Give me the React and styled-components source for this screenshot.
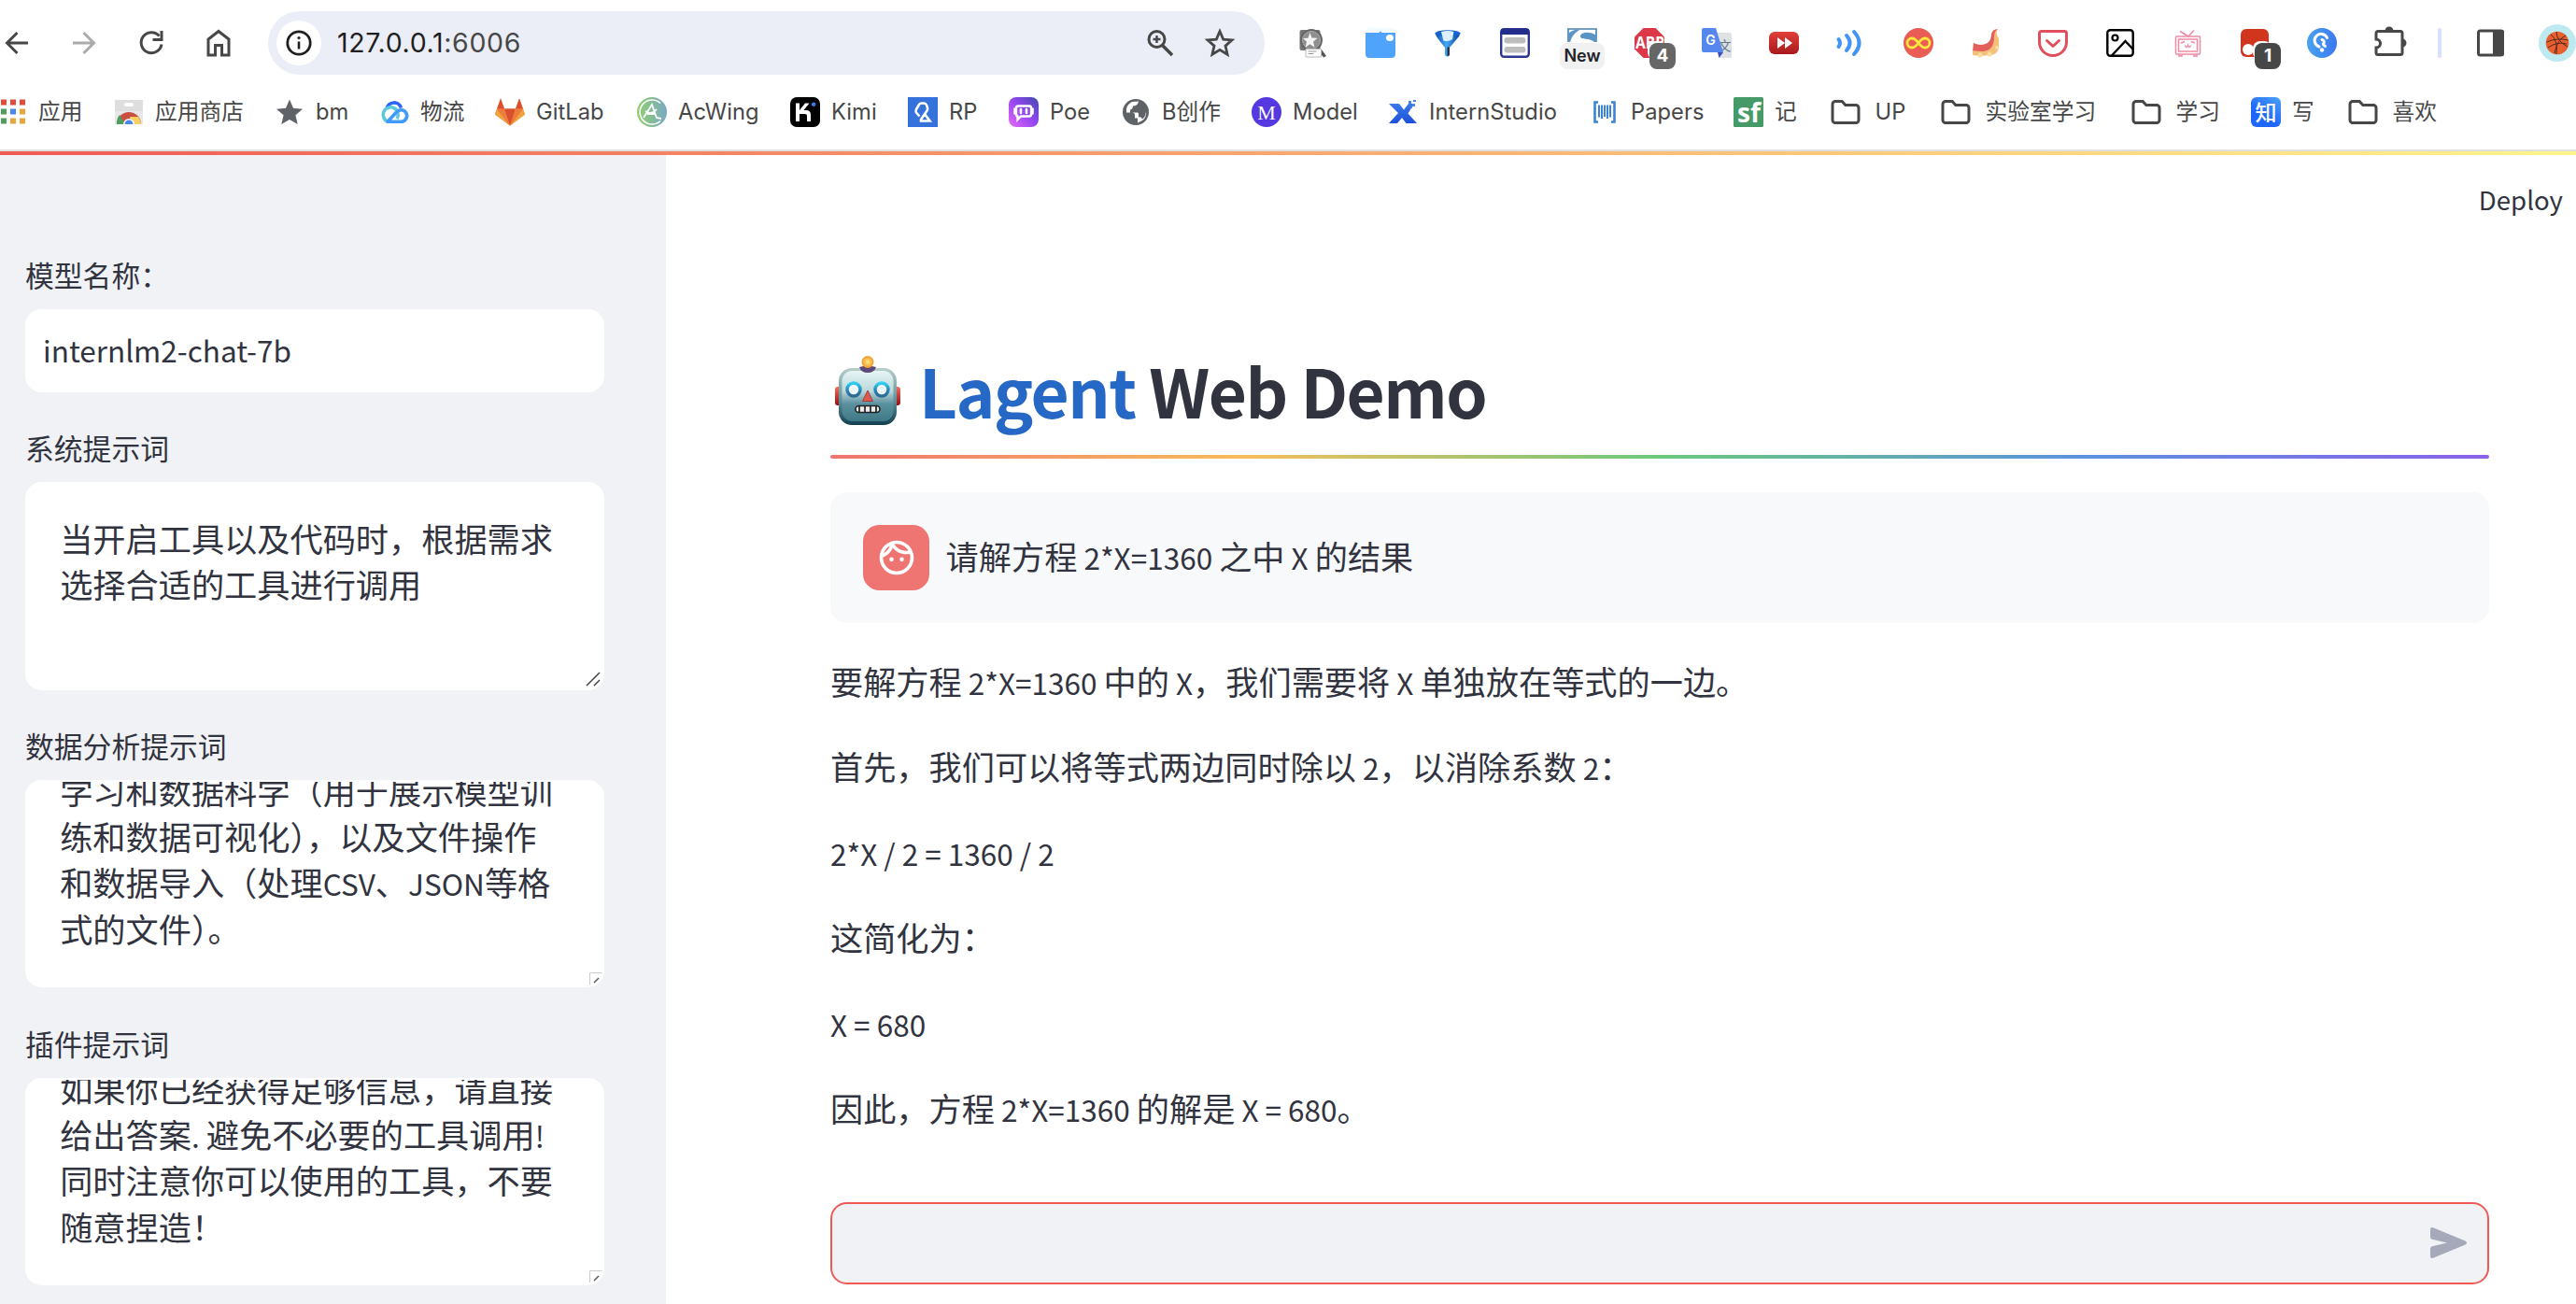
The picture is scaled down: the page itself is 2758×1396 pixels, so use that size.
import React from "react";
import styled, { createGlobalStyle } from "styled-components";

const Global = createGlobalStyle`
  * { box-sizing: border-box; }
  body { margin: 0; background: #fff; overflow: hidden; }
`;
const UI = '"Inter", "Noto Sans CJK SC", sans-serif';
const BODY = '"Noto Sans CJK SC", "Noto Sans", sans-serif';

const Page = styled.div`
  width: 2758px;
  height: 1396px;
  display: flex;
  flex-direction: column;
  overflow: hidden;
  font-family: ${BODY};
  color: #31333f;
`;

/* ---------- browser chrome ---------- */
const Toolbar = styled.div`
  height: 92px;
  flex: none;
  display: flex;
  align-items: center;
`;
const NavGroup = styled.div`
  width: 287px;
  flex: none;
  display: flex;
  padding-left: 2px;
`;
const NavButton = styled.div`
  width: 72px;
  flex: none;
`;
const Glyph = styled.svg`
  display: block;
  width: 32px;
  height: 32px;
  overflow: visible;
  flex: none;
`;
const Omnibox = styled.div`
  width: 1067px;
  height: 68px;
  flex: none;
  border-radius: 34px;
  background: #ebeef7;
  display: flex;
  align-items: center;
  padding: 0 32px 0 9px;
`;
const SiteInfo = styled.div`
  width: 48px;
  height: 48px;
  border-radius: 50%;
  background: #fff;
  display: flex;
  align-items: center;
  justify-content: center;
`;
const Url = styled.div`
  flex: 1;
  margin-left: 17px;
  font: 400 28.5px/40px ${UI};
  letter-spacing: 0.65px;
  color: #1f1f1f;
`;
const Port = styled.span`
  color: #474747;
`;
const OmniIcons = styled.div`
  display: flex;
  gap: 32px;
`;
const Extensions = styled.div`
  display: flex;
  margin-left: 16px;
  align-items: center;
`;
const Ext = styled.div`
  position: relative;
  width: 72px;
  flex: none;
  display: flex;
  justify-content: center;
`;
const Badge = styled.span`
  position: absolute;
  top: 16px;
  left: ${(p) => (p.$wide ? 12 : 36)}px;
  width: ${(p) => (p.$wide ? 48 : 28)}px;
  height: 28px;
  border-radius: 8px;
  background: ${(p) => p.$bg};
  color: ${(p) => p.$fg};
  font: ${(p) => (p.$wide ? "600 18px" : "700 19px")}/27px ${UI};
  text-align: center;
`;
const Divider = styled.div`
  width: 4px;
  height: 32px;
  border-radius: 2px;
  background: #d6e2fb;
  margin-left: 16px;
`;
const PanelButton = styled.div`
  margin-left: 36px;
`;
const Avatar = styled.div`
  width: 40px;
  height: 40px;
  flex: none;
  margin-left: 36px;
  border-radius: 50%;
  background: #bde9f0;
  display: flex;
  align-items: center;
  justify-content: center;
`;
const Bookmarks = styled.div`
  height: 68px;
  flex: none;
  display: flex;
  align-items: center;
  padding-bottom: 12px;
`;
const BookmarkRow = styled.div`
  display: flex;
  margin-left: -3px;
`;
const Bookmark = styled.div`
  width: ${(p) => p.$w}px;
  flex: none;
  display: flex;
  align-items: center;
  gap: ${(p) => (p.$folder ? 15.5 : 12)}px;
  white-space: nowrap;
  font: 400 23.7px/32px ${UI};
  letter-spacing: 0.05px;
  color: #474747;
`;
const ChromeEdge = styled.div`
  height: 2px;
  flex: none;
  background: #e0e0e0;
`;
const Decoration = styled.div`
  height: 4px;
  flex: none;
  background: linear-gradient(90deg, #f05a55, #fff58a);
`;

/* ---------- app ---------- */
const Body = styled.div`
  flex: 1;
  display: flex;
  min-height: 0;
`;
const Sidebar = styled.div`
  width: 713px;
  flex: none;
  background: #f0f2f6;
  padding: 105px 0 0 27px;
`;
const Field = styled.div`
  width: 620px;
  margin-bottom: ${(p) => p.$gap}px;
`;
const Label = styled.div`
  height: 60px;
  font-size: 30.8px;
  line-height: 45px;
`;
const TextInput = styled.div`
  height: 89px;
  border-radius: 17.6px;
  background: #fff;
  padding: 0 19px;
  font-size: 31.5px;
  line-height: 86px;
`;
const TextArea = styled.div`
  position: relative;
  height: ${(p) => p.$h}px;
  border-radius: 17.6px;
  background: #fff;
  border: 2px solid #fff;
  padding: 35.2px 0 35.2px 35.2px;
  overflow: hidden;
  display: flex;
  flex-direction: column;
  justify-content: ${(p) => (p.$scrolled ? "flex-end" : "flex-start")};
  font-size: 35.2px;
  line-height: 46px;
  white-space: pre;
`;
const Line = styled.div`
  flex: none;
  height: 49.3px;
`;
const Grip = styled.svg`
  position: absolute;
  right: 0;
  bottom: 0;
  width: 18px;
  height: 20px;
`;
const Main = styled.div`
  flex: 1;
  display: flex;
  flex-direction: column;
`;
const Header = styled.div`
  height: 206px;
  flex: none;
  padding: 22px 14px 0 0;
  text-align: right;
  font-size: 27.6px;
  line-height: 50px;
`;
const Column = styled.div`
  width: 1776px;
  margin-left: 176px;
`;
const Title = styled.h1`
  margin: 0;
  height: 115px;
  padding-bottom: 24px;
  display: flex;
  align-items: center;
  font-size: 71px;
  font-weight: 700;
  line-height: 91px;
  letter-spacing: -1.5px;
  white-space: pre;
`;
const Robot = styled.svg`
  width: 70px;
  height: 74px;
  margin: 0 20px 0 5px;
`;
const Brand = styled.span`
  color: #2668c5;
`;
const Rainbow = styled.div`
  height: 4px;
  border-radius: 2px;
  background: linear-gradient(90deg, #f07470, #f6bd5c 25%, #6cc97c 50%, #5b93dd 75%, #8a62ea);
`;
const UserMessage = styled.div`
  margin-top: 36px;
  height: 140px;
  border-radius: 17.6px;
  background: #f8f9fb;
  display: flex;
  align-items: center;
  padding-left: 35px;
  gap: 17.6px;
`;
const UserAvatar = styled.div`
  width: 71px;
  height: 70px;
  border-radius: 17.6px;
  background: #ef7572;
  display: flex;
  align-items: center;
  justify-content: center;
`;
const Text = styled.p`
  margin: 0;
  font-size: 35.2px;
  line-height: 51.5px;
  height: 56.3px;
  white-space: pre;
`;
const Answer = styled.div`
  margin-top: 36px;
  display: flex;
  flex-direction: column;
  gap: 35.2px;
`;
const ChatInput = styled.div`
  margin-top: 70.2px;
  height: 88px;
  border: 2px solid #ef5a54;
  border-radius: 17.6px;
  background: #f0f2f6;
  display: flex;
  align-items: center;
  justify-content: flex-end;
  padding-right: 22px;
`;
const Latin = styled.span`
  font-size: 0.8955em;
  line-height: 1;
`;
const Mixed = ({ children }) =>
  children
    .split(/([\x20-\x7e]+)/)
    .map((s, i) => (/^[\x20-\x7e]+$/.test(s) ? <Latin key={i}>{s}</Latin> : s));

const G = "#474747";
const stroke = (c, w) => ({ fill: "none", stroke: c, strokeWidth: w });

const Folder = () => (
  <Glyph viewBox="0 0 32 32">
    <path d="M2 7.5a3 3 0 0 1 3-3h7.2l3.6 4H27a3 3 0 0 1 3 3v13a3 3 0 0 1-3 3H5a3 3 0 0 1-3-3z" {...stroke(G, 3)} />
  </Glyph>
);

const bookmarks = [
  { w: 125, t: "应用", i: <Glyph viewBox="0 0 32 32">
      {["#e24a3b", "#e24a3b", "#e24a3b", "#4f9c5f", "#4787ee", "#e5a63a", "#4f9c5f", "#e5a63a", "#e5a63a"].map((c, k) => (
        <rect key={k} x={4 + (k % 3) * 10} y={2.5 + Math.floor(k / 3) * 10} width="6" height="6" fill={c} />))}
    </Glyph> },
  { w: 172, t: "应用商店", i: <Glyph viewBox="0 0 32 32">
      <rect x="1" y="3" width="30" height="26" fill="#e8e8e8" /><path d="M1 3h30v12H1z" fill="#dedede" />
      <rect x="11" y="6" width="10" height="4" rx="2" fill="#fff" />
      <path d="M3 29a13 13 0 0 1 26 0z" fill="#c94f42" /><path d="M3 29q0-7 3-10l6 10z" fill="#4f9c5f" /><path d="M17 21h9q3 4 3 8H18z" fill="#f6d060" />
      <path d="M10 29a6 6 0 0 1 12 0z" fill="#fff" /><path d="M11.5 29a4.5 4.5 0 0 1 9 0z" fill="#4d86e8" />
    </Glyph> },
  { w: 112, t: "bm", i: <Glyph viewBox="0 0 32 32"><path d="M16 2.5l4 9.3 10 .9-7.600 6.600 2.300 9.800-8.700-5.200-8.700 5.200 2.300-9.800L2 12.700l10-.9z" fill="#5f6368" /></Glyph> },
  { w: 124, t: "物流", i: <Glyph viewBox="0 0 32 32">
      <path d="M8 12.500a8 8 0 0 1 15.500-1" {...stroke("#2c66f5", 3.600)} />
      <path d="M19 23a8 8 0 1 0-9 3.500" {...stroke("#5cc8dc", 3.600)} />
      <path d="M9 26.300L18.500 16a6.300 6.300 0 1 1 4.500 10.300z" {...stroke("#419bfa", 3.600)} strokeLinejoin="round" />
    </Glyph> },
  { w: 152, t: "GitLab", i: <Glyph viewBox="0 0 32 32">
      <path d="M16 30.500L0 18.500 6 1.500 10 12.500h12L26 1.500l6 17z" fill="#e8743b" />
      <path d="M6 1.500l4 11H2zM26 1.500l4 11h-8z" fill="#d9502f" /><path d="M10 12.500h12l-6 18z" fill="#d9502f" />
      <path d="M2 12.500L0 18.500l16 12zM30 12.500l2 6-16 12z" fill="#f0a33c" /><path d="M2 12.500h8l6 18zM30 12.500h-8l-6 18z" fill="#ee7c3d" />
    </Glyph> },
  { w: 164, t: "AcWing", i: <Glyph viewBox="0 0 32 32">
      <defs><linearGradient id="ac"><stop offset="0" stopColor="#8fd06c" /><stop offset="1" stopColor="#7aa9c4" /></linearGradient></defs>
      <circle cx="16" cy="16" r="16" fill="url(#ac)" /><path d="M25 6.500a13 13 0 1 0 0 19" {...stroke("#fff", 1.600)} />
      <path d="M7 22L16 8l5 14 5 1M9 15q6 5 12-2M11 18h8" {...stroke("#fff", 1.800)} />
    </Glyph> },
  { w: 126, t: "Kimi", i: <Glyph viewBox="0 0 32 32"><rect width="32" height="32" rx="7" fill="#000" />
      <path d="M6 6.500h4v7.500l6-7.500h4.500L14.500 14H17q5 0 5 5v7h-4v-6q0-2-2-2h-6v8H6z" fill="#fff" /><path d="M23 9V7.500A2.200 2.200 0 1 1 25.300 10z" fill="#2f80f0" /></Glyph> },
  { w: 108, t: "RP", i: <Glyph viewBox="0 0 32 32"><rect width="32" height="32" fill="#3672dc" />
      <path d="M12.500 20.500L9 16.500q-1-1.500 0-3.500l3-5q1-1.500 2.500-1.500h3q1.500 0 2.500 2l1 3q.500 1.500-.500 3L14 24v1.500h9.500L18 18" {...stroke("#fff", 2.600)} /></Glyph> },
  { w: 120, t: "Poe", i: <Glyph viewBox="0 0 32 32">
      <defs><linearGradient id="poe" x1="0" y1="1" x2="1" y2="0"><stop offset="0" stopColor="#e86af5" /><stop offset=".5" stopColor="#9747f2" /><stop offset="1" stopColor="#4149b0" /></linearGradient></defs>
      <rect width="32" height="32" rx="8" fill="url(#poe)" />
      <path d="M10 9.500h12a2 2 0 0 1 2 2v7a2 2 0 0 1-2 2H13l-3.500 3.500v-3.500a2 2 0 0 1-1.500-2v-7a2 2 0 0 1 2-2z" {...stroke("#fff", 2.400)} />
      <path d="M6.500 12.500v5M25.500 12.500v5M13 13v4M19 13v4" {...stroke("#fff", 2.600)} strokeLinecap="round" /></Glyph> },
  { w: 140, t: "B创作", i: <Glyph viewBox="0 0 32 32"><circle cx="16" cy="16" r="14" fill="#5f6368" />
      <path d="M19 4.500q-1 5-6 5 0 3-3 4v3h8q1 0 1 2v3q3-1 4 2 4-3 4-9 1 8-5 11l-4 2v-5h-3v-3q0-3-3-3H6q-1-8 6-11.500z" fill="#fff" /></Glyph> },
  { w: 146, t: "Model", i: <Glyph viewBox="0 0 32 32"><circle cx="16" cy="16" r="16" fill="#5538e0" />
      <text x="16" y="23.500" textAnchor="middle" fontFamily="Liberation Serif, serif" fontSize="22" fill="#fff">M</text></Glyph> },
  { w: 216, t: "InternStudio", i: <Glyph viewBox="0 0 32 32">
      <defs><linearGradient id="ix" x2="0" y2="1"><stop offset="0" stopColor="#3a7ae8" /><stop offset="1" stopColor="#1c50d8" /></linearGradient></defs>
      <path d="M1 7h11l5 6.500L22 7h6l-6.500 10.500L31 28H19.500l-4.500-6-5 6H1l10-11z" fill="url(#ix)" />
      <path d="M22 4h3v3h-3zM26 7h3v3h-3zM24 10h2v2h-2zM27 3h3v2h-3z" fill="#4a86ea" /></Glyph> },
  { w: 154, t: "Papers", i: <Glyph viewBox="0 0 32 32"><path d="M9 5.500H5.500v21H9M23 5.500h3.500v21H23" {...stroke("#3c82d6", 2.600)} />
      <path d="M10 8.500v13M13 8.500v14.500M16 8.500v12.500M19 8.500v14.500M22 8.500v13" {...stroke("#3c82d6", 2)} /></Glyph> },
  { w: 104, t: "记", i: <Glyph viewBox="0 0 32 32"><rect width="32" height="32" rx="1.500" fill="#459a67" />
      <text x="16.500" y="26.500" textAnchor="middle" fontFamily="Open Sans, sans-serif" fontWeight="700" fontSize="29" textLength="25" lengthAdjust="spacingAndGlyphs" fill="#fff">sf</text></Glyph> },
  { w: 118, t: "UP", folder: true },
  { w: 204, t: "实验室学习", folder: true },
  { w: 128, t: "学习", folder: true },
  { w: 104, t: "写", i: <Glyph viewBox="0 0 32 32">
      <defs><linearGradient id="zh" x1="1" y1="0" x2=".3" y2="1"><stop offset="0" stopColor="#4aa3f7" /><stop offset=".7" stopColor="#1f66fa" /></linearGradient></defs>
      <rect width="32" height="32" rx="6" fill="url(#zh)" />
      <text x="16" y="24.500" textAnchor="middle" fontFamily="Noto Sans CJK SC, sans-serif" fontWeight="500" fontSize="23" fill="#fff">知</text></Glyph> },
  { w: 120, t: "喜欢", folder: true },
];

const extensions = [
  <Glyph viewBox="0 0 32 32"><rect x="1.500" y="2" width="22" height="22" rx="2" fill="#777" /><circle cx="14" cy="13" r="12" fill="#666" /><circle cx="14" cy="13" r="9.500" fill="#8e8e8e" stroke="#aaa" />
    <path d="M12.500 5l2 5.500 6 .3-4.500 4 1.500 6-5-3.500-5 3.500 1.500-6L5 11l5.500-.3z" fill="#f4f4f4" /><path d="M22 25l3-2 5 7-3 1.500z" fill="#555" /><path d="M8 22.500h16.500V31H8z" fill="#fff" stroke="#bbb" /><path d="M10.500 25h9M10.500 27.500h6" stroke="#999" /></Glyph>,
  <Glyph viewBox="0 0 32 32"><path d="M2 0h28l2 4H0z" fill="#eff9fe" /><path d="M0 5h14.500q1.500-3 3 0H32v23a4 4 0 0 1-4 4H4a4 4 0 0 1-4-4z" fill="#50a3fa" /><ellipse cx="26" cy="10.500" rx="4" ry="3.500" fill="#fff" /></Glyph>,
  <Glyph viewBox="0 0 32 32"><defs><linearGradient id="fn"><stop offset="0" stopColor="#0b4fae" /><stop offset=".45" stopColor="#4aa6f2" /><stop offset=".8" stopColor="#1a64c0" /><stop offset="1" stopColor="#0d3f8c" /></linearGradient></defs>
    <path d="M2.500 5.500q1 3.500 3.500 6.500l7 9v8q3 3 5 0v-8l7.500-9q3-3 4-6.500z" fill="url(#fn)" /><ellipse cx="16" cy="5.800" rx="13.500" ry="3.600" fill="#1565cc" /><path d="M9 4q7-2 13.500 0l-1.500 8q-4 3-9.500 1.500z" fill="#dcf0fd" /><path d="M15.500 20.500v9.500q2 0 2.500-1.500v-8z" fill="#26324a" /></Glyph>,
  <Glyph viewBox="0 0 32 32"><rect x="1.200" y="1.200" width="29.600" height="29.600" rx="3" fill="#fff" stroke="#2c3691" strokeWidth="2.400" /><path d="M1 1h30v6H1z" fill="#232d8c" /><rect x="4.500" y="10" width="23" height="6.500" rx="3" fill="#bdbdbd" /><rect x="4.500" y="20" width="23" height="6.500" rx="3" fill="#bdbdbd" /></Glyph>,
  <><Glyph viewBox="0 0 32 32"><path d="M1 15V1h30v14" fill="#fff" stroke="#4a7fab" strokeWidth="1.600" /><path d="M31 8C25 3 14 4 14 9c0 4 10 1 15 6h2z" fill="#5b95c6" /><path d="M1 15V6q6-5 12-4Q5 7 3 15z" fill="#5b95c6" /></Glyph><Badge $wide $bg="#f1f1f1" $fg="#1f2328">New</Badge></>,
  <><Glyph viewBox="0 0 32 32"><path d="M9.500 0h13L32 9.500v13L22.500 32h-13L0 22.500v-13z" fill="#dc3848" /><text x="1" y="22" fontFamily="Open Sans, sans-serif" fontWeight="700" fontSize="17.500" textLength="31" lengthAdjust="spacingAndGlyphs" fill="#fff">ABP</text><rect x="14" y="14" width="20" height="20" rx="8" fill="#fff" /></Glyph><Badge $bg="#666" $fg="#fff">4</Badge></>,
  <Glyph viewBox="0 0 32 32"><path d="M12 5h18q2 0 2 2v23q0 2-2 2H19z" fill="#e0e1e2" /><text x="24.500" y="24" textAnchor="middle" fontFamily="Noto Sans CJK SC, sans-serif" fontSize="14" fill="#60798a">文</text><path d="M17 26h6l-4.500 6z" fill="#3a4fbb" /><path d="M2 0h13l8 26H2q-2 0-2-2V2q0-2 2-2z" fill="#5587ee" /><text x="9.500" y="18" textAnchor="middle" fontFamily="Inter, sans-serif" fontWeight="600" fontSize="14" fill="#fff">G</text></Glyph>,
  <Glyph viewBox="0 0 32 32"><defs><linearGradient id="yt" x2="0" y2="1"><stop offset="0" stopColor="#e0403b" /><stop offset="1" stopColor="#a9191b" /></linearGradient></defs><rect y="4" width="32" height="24" rx="6" fill="url(#yt)" /><path d="M9 10l8 6-8 6zM17 10l8 6-8 6z" fill="#fff" /></Glyph>,
  <Glyph viewBox="0 0 32 32"><g {...stroke("#4394f8", 4)} strokeLinecap="round"><path d="M2.500 12q3 4 0 8M11 8q7 8 0 16M19 4q11 12 0 24" /></g></Glyph>,
  <Glyph viewBox="0 0 32 32"><circle cx="16" cy="16" r="16" fill="#ea5d56" /><path d="M16 16c-3-4-5-5-7-5a5 5 0 0 0 0 10c2 0 4-1 7-5s5-5 7-5a5 5 0 0 1 0 10c-2 0-4-1-7-5z" {...stroke("#fde93a", 2.800)} /></Glyph>,
  <Glyph viewBox="0 0 32 32"><path d="M2 25l17-2 4-19 6-3q-3 5 1 10v9q-1 9-10 9l-9 1-9-1z" fill="#f3c078" /><path d="M3 16q8 4 15 0 4-3 4-9 1-6 7-6-4 2-4 9 0 14-12 15L2 24.500z" fill="#e45f5c" /><circle cx="10" cy="29" r="2.500" fill="#f8dca0" /><circle cx="20" cy="28" r="2.500" fill="#f8dca0" /><circle cx="28" cy="21" r="2" fill="#f8dca0" /></Glyph>,
  <Glyph viewBox="0 0 32 32"><path d="M3.500 3.500h25a2 2 0 0 1 2 2V15a14.500 14.500 0 0 1-29 0V5.500a2 2 0 0 1 2-2z" {...stroke("#e04f5d", 3)} /><path d="M9.500 13.500l6.500 6 6.500-6" {...stroke("#e04f5d", 3)} strokeLinecap="round" strokeLinejoin="round" /></Glyph>,
  <Glyph viewBox="0 0 32 32"><rect x="2.300" y="2.300" width="27.400" height="27.400" rx="3" {...stroke("#000", 2.400)} /><circle cx="10.500" cy="10.500" r="3" {...stroke("#000", 2.200)} /><path d="M7 29.500L21.500 14l8.500 9" {...stroke("#000", 2.400)} /></Glyph>,
  <Glyph viewBox="0 0 32 32"><g {...stroke("#ee8aa5", 1.500)}><rect x="3.500" y="9" width="26" height="19" rx="1" /><rect x="6.500" y="12" width="20" height="13" /><path d="M8 3.500L17 9l6-6.500M7 28v2h3v-2M23 28v2h3v-2M9 16l4-1.500M24 16l-4-1.500M13.500 18.500q1.500 4 3 0 1.500 4 3 0" /></g></Glyph>,
  <><Glyph viewBox="0 0 32 32"><rect x="1" y="1" width="30" height="30" rx="6" fill="#d1351e" /><circle cx="9" cy="23" r="6" fill="#fff" /><rect x="14" y="14" width="20" height="20" rx="8" fill="#fff" /></Glyph><Badge $bg="#474747" $fg="#fff">1</Badge></>,
  <Glyph viewBox="0 0 32 32"><defs><linearGradient id="gl"><stop offset="0" stopColor="#4aa2ee" /><stop offset="1" stopColor="#3b78f0" /></linearGradient></defs><circle cx="16" cy="16" r="16" fill="url(#gl)" /><path d="M21.500 10.500a7 7 0 1 0-8.500 9.500M16 12.500q3 .500 2 3.500-2 1 1.500 3.500" {...stroke("#fff", 3)} strokeLinecap="round" /><circle cx="16" cy="23.500" r="2.200" fill="#fff" /></Glyph>,
  <Glyph viewBox="0 0 32 32"><path d="M4 3.500h24a2 2 0 0 1 2 2v21a2 2 0 0 1-2 2H4a2 2 0 0 1-2-2v-5.500a4.500 4.500 0 0 0 0-9V5.500a2 2 0 0 1 2-2z" {...stroke(G, 3)} /><path d="M11.500 3a4.500 4.500 0 0 1 9 0zM30 11.500a4.500 4.500 0 0 1 0 9z" fill={G} /></Glyph>,
];

export default function App() {
  return (
    <Page>
      <Global />
      <Toolbar>
        <NavGroup>
          <NavButton><Glyph viewBox="0 0 32 32"><path d="M28 16H6M16.500 5L5.500 16l11 11" {...stroke(G, 3)} /></Glyph></NavButton>
          <NavButton><Glyph viewBox="0 0 32 32"><path d="M4 16h22M15.500 5l11 11-11 11" {...stroke("#ababab", 3)} /></Glyph></NavButton>
          <NavButton><Glyph viewBox="0 0 32 32"><path d="M27 17.500A11 11 0 1 1 24.500 8.500" {...stroke(G, 3)} /><path d="M28.500 3v11h-11v-3h8V3z" fill={G} /></Glyph></NavButton>
          <NavButton><Glyph viewBox="0 0 32 32"><path d="M5 29V12L16 3.500 27 12v17h-7.500V18.500h-7V29z" {...stroke(G, 3)} /></Glyph></NavButton>
        </NavGroup>
        <Omnibox>
          <SiteInfo>
            <Glyph viewBox="0 0 32 32"><circle cx="16" cy="16" r="12.200" {...stroke("#1f1f1f", 2.800)} /><path d="M16 14.500v8" stroke="#1f1f1f" strokeWidth="2.600" /><circle cx="16" cy="10.500" r="1.600" fill="#1f1f1f" /></Glyph>
          </SiteInfo>
          <Url>127.0.0.1<Port>:6006</Port></Url>
          <OmniIcons>
            <Glyph viewBox="0 0 32 32"><circle cx="12.500" cy="12" r="8.500" {...stroke(G, 3)} /><path d="M18.500 18.500L29 29" stroke={G} strokeWidth="3.600" /><path d="M12.500 8v8M8.500 12h8" stroke={G} strokeWidth="2.400" /></Glyph>
            <Glyph viewBox="0 0 32 32"><path d="M16 3.500l3.700 8.600 9.300.8-7 6.200 2.100 9.200-8.100-4.900-8.100 4.900L10 19.100l-7-6.200 9.300-.8z" {...stroke(G, 2.800)} /></Glyph>
          </OmniIcons>
        </Omnibox>
        <Extensions>
          {extensions.map((icon, i) => <Ext key={i}>{icon}</Ext>)}
          <Divider />
          <PanelButton>
            <Glyph viewBox="0 0 32 32"><rect x="3.500" y="3" width="26" height="26" rx="2" {...stroke(G, 3)} /><path d="M19 2h10q2 0 2 2v24q0 2-2 2H19z" fill={G} /></Glyph>
          </PanelButton>
          <Avatar>
            <Glyph viewBox="0 0 32 32"><circle cx="16" cy="16" r="12.300" fill="#e8602f" /><path d="M9 7q8 6 6 21M15 4q0 10 12 16M4.500 15q12-5 23-2M25 8q-9 4-12 19M6 21q10-7 20-4" {...stroke("#54281c", 1)} /></Glyph>
          </Avatar>
        </Extensions>
      </Toolbar>
      <Bookmarks>
        <BookmarkRow>
          {bookmarks.map((b) => (
            <Bookmark key={b.t} $w={b.w} $folder={b.folder}>
              {b.folder ? <Folder /> : b.i}
              <span>{b.t}</span>
            </Bookmark>
          ))}
        </BookmarkRow>
      </Bookmarks>
      <ChromeEdge />
      <Decoration />
      <Body>
        <Sidebar>
          <Field $gap={36}><Label>模型名称：</Label><TextInput>internlm2-chat-7b</TextInput></Field>
          <Field $gap={36}>
            <Label>系统提示词</Label>
            <TextArea $h={223}>
              <Line>当开启工具以及代码时，根据需求</Line>
              <Line>选择合适的工具进行调用</Line>
              <Grip viewBox="0 0 18 20"><path d="M1 17L15 3M9 17l6-6" stroke="#444" strokeWidth="1.500" /></Grip>
            </TextArea>
          </Field>
          <Field $gap={37}>
            <Label>数据分析提示词</Label>
            <TextArea $h={222} $scrolled>
              <Line>学习和数据科学（用于展示模型训</Line>
              <Line>练和数据可视化），以及文件操作</Line>
              <Line><Mixed>和数据导入（处理CSV、JSON等格</Mixed></Line>
              <Line>式的文件）。</Line>
              <Grip viewBox="0 0 18 20"><path d="M4.500 19V6.500H18" fill="none" stroke="#ccc" /><path d="M9 17l5-5" stroke="#555" strokeWidth="1.500" /></Grip>
            </TextArea>
          </Field>
          <Field $gap={0}>
            <Label>插件提示词</Label>
            <TextArea $h={222} $scrolled>
              <Line>如果你已经获得足够信息，请直接</Line>
              <Line><Mixed>给出答案. 避免不必要的工具调用!</Mixed></Line>
              <Line>同时注意你可以使用的工具，不要</Line>
              <Line>随意捏造！</Line>
              <Grip viewBox="0 0 18 20"><path d="M4.500 19V6.500H18" fill="none" stroke="#ccc" /><path d="M9 17l5-5" stroke="#555" strokeWidth="1.500" /></Grip>
            </TextArea>
          </Field>
        </Sidebar>
        <Main>
          <Header>Deploy</Header>
          <Column>
            <Title>
              <Robot viewBox="0 0 70 74">
                <defs>
                  <linearGradient id="rb" x2="0" y2="1"><stop offset="0" stopColor="#e6f5f5" /><stop offset=".4" stopColor="#bcd8db" /><stop offset=".65" stopColor="#5c929f" /><stop offset="1" stopColor="#3e7886" /></linearGradient>
                  <linearGradient id="rs" x2="0" y2="1"><stop offset="0" stopColor="#b9cfca" /><stop offset=".6" stopColor="#5b8b95" /><stop offset="1" stopColor="#123f50" /></linearGradient>
                  <linearGradient id="rr" x2="0" y2="1"><stop offset="0" stopColor="#f0705f" /><stop offset="1" stopColor="#8f1016" /></linearGradient>
                  <linearGradient id="re" x2="0" y2="1"><stop offset="0" stopColor="#2fd0f2" /><stop offset=".6" stopColor="#2b7fb5" /><stop offset="1" stopColor="#2f6b90" /></linearGradient>
                  <radialGradient id="ro"><stop offset="0" stopColor="#ffe98a" /><stop offset="1" stopColor="#f09a24" /></radialGradient>
                </defs>
                <rect x="0" y="33" width="8" height="20" rx="3" fill="url(#rr)" />
                <rect x="62" y="33" width="8" height="20" rx="3" fill="url(#rr)" />
                <rect x="4" y="13" width="62" height="61" rx="14" fill="url(#rs)" />
                <rect x="7.500" y="16" width="55" height="54" rx="11" fill="url(#rb)" />
                <path d="M26 12q9-3 18 0-2 6-9 6t-9-6z" fill="#5d4a7a" />
                <circle cx="35" cy="6.500" r="6.500" fill="url(#ro)" />
                <circle cx="20" cy="36" r="7" fill="#edf6f9" stroke="url(#re)" strokeWidth="3.400" />
                <circle cx="50" cy="36" r="7" fill="#edf6f9" stroke="url(#re)" strokeWidth="3.400" />
                <path d="M35 37l5.500 11.500h-11z" fill="#dc5a50" stroke="#a83a3a" />
                <rect x="22" y="53.500" width="26" height="7" rx="3.500" fill="#f0eee8" stroke="#1d2326" strokeWidth="1.600" />
                <path d="M26 53v8M32 53v8M38 53v8M44 53v8" stroke="#1d2326" strokeWidth="1.700" />
              </Robot>
              <Brand>Lagent</Brand> Web Demo
            </Title>
            <Rainbow />
            <UserMessage>
              <UserAvatar>
                <svg width="44" height="44" viewBox="0 0 24 24" fill="#fff"><path d="M10.250 13a1.250 1.250 0 1 1-2.500 0 1.250 1.250 0 0 1 2.500 0zM15 11.750a1.250 1.250 0 1 0 0 2.500 1.250 1.250 0 0 0 0-2.500zM22 12c0 5.520-4.480 10-10 10S2 17.520 2 12 6.480 2 12 2s10 4.480 10 10zM10.660 4.120C12.060 6.440 14.600 8 17.500 8c.46 0 .91-.05 1.340-.12C17.440 5.560 14.900 4 12 4c-.46 0-.91.05-1.340.12zM4.420 9.470c1.710-.97 3.030-2.550 3.660-4.440C6.370 6 5.050 7.580 4.420 9.470zM20 12c0-.78-.12-1.530-.33-2.240-.7.150-1.420.240-2.170.240-3.130 0-5.920-1.440-7.760-3.690C8.690 8.870 6.600 10.880 4 11.860c.01.04 0 .09 0 .14 0 4.410 3.590 8 8 8s8-3.590 8-8z" /></svg>
              </UserAvatar>
              <Text><Mixed>请解方程 2*X=1360 之中 X 的结果</Mixed></Text>
            </UserMessage>
            <Answer>
              <Text><Mixed>要解方程 2*X=1360 中的 X，我们需要将 X 单独放在等式的一边。</Mixed></Text>
              <Text><Mixed>首先，我们可以将等式两边同时除以 2，以消除系数 2：</Mixed></Text>
              <Text><Mixed>2*X / 2 = 1360 / 2</Mixed></Text>
              <Text>这简化为：</Text>
              <Text><Mixed>X = 680</Mixed></Text>
              <Text><Mixed>因此，方程 2*X=1360 的解是 X = 680。</Mixed></Text>
            </Answer>
            <ChatInput>
              <svg width="39" height="33" viewBox="0 0 39 33"><path d="M0 2.500Q0-.8 3 .3l34.500 14.200q3 2 0 4L3 32.700q-3 1-3-2v-8q0-2 2-2.500l16-3.700-16-3.700q-2-.5-2-2.500z" fill="#a6a9b9" /></svg>
            </ChatInput>
          </Column>
        </Main>
      </Body>
    </Page>
  );
}
